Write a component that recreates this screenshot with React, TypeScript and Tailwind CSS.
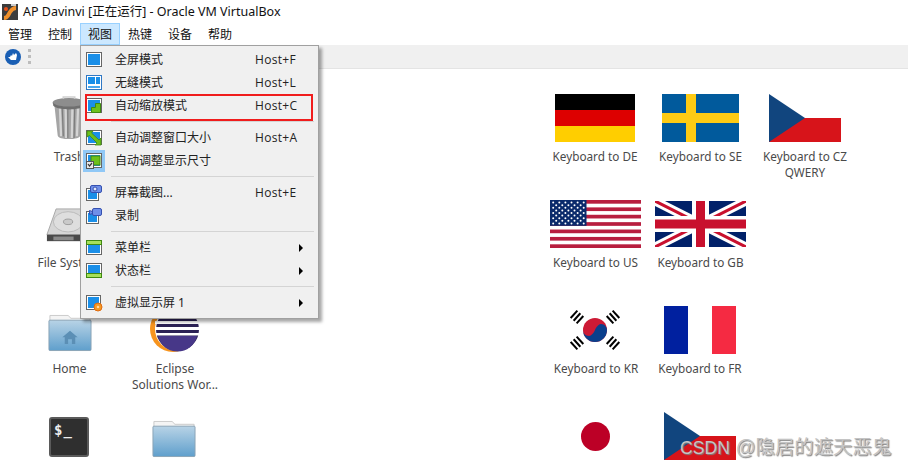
import type { ReactNode } from "react";

const menuFont =
	"font-['Noto_Sans','Noto_Sans_CJK_SC',sans-serif]";

function Frame({
	children,
	small,
	light,
}: {
	children?: ReactNode;
	small?: boolean;
	light?: boolean;
}) {
	return (
		<svg width="16" height="16" viewBox="0 0 16 16" className="shrink-0">
			{small ? (
				<>
					<rect x="0.5" y="3.5" width="12" height="12" fill="#fff" stroke="#666" />
					<rect x="2" y="5" width="9" height="9" fill="#1a8fe8" />
				</>
			) : (
				<>
					<rect x="0.5" y="0.5" width="15" height="14" fill="#fff" stroke="#666" />
					{!light && <rect x="2" y="2" width="12" height="11" fill="#1a8fe8" />}
				</>
			)}
			{children}
		</svg>
	);
}

const menuIcons: Record<string, ReactNode> = {
	full: <Frame />,
	seamless: (
		<Frame light>
			<rect x="0.5" y="0.5" width="15" height="14" fill="#fff" stroke="#2f78c4" />
			<rect x="2" y="2" width="7" height="7" fill="#1a8fe8" />
			<rect x="10" y="2" width="4" height="7" fill="#1a8fe8" />
			<rect x="2" y="11" width="12" height="2" fill="#4aa8ee" />
		</Frame>
	),
	autoscale: (
		<Frame>
			<path d="M14.500 5.500h-5v4h-4v5h9z" fill="#6cc01c" stroke="#3f8a10" />
		</Frame>
	),
	fit: (
		<Frame>
			<path d="M1 1h6L5.500 3 13 10l2-2v7H9l2-2L3.500 5.500 1 7z" fill="#6cc01c" stroke="#3f8a10" strokeWidth="0.8" />
		</Frame>
	),
	guest: (
		<Frame>
			<rect x="5" y="3" width="9" height="9" fill="#6cc01c" stroke="#3f8a10" />
			<rect x="0.500" y="8.500" width="7" height="7" fill="#e8e8e8" stroke="#555" />
			<path d="M2 11l1.500 2L6 10" fill="none" stroke="#333" strokeWidth="1.2" />
		</Frame>
	),
	screenshot: (
		<Frame small>
			<rect x="4.500" y="0.500" width="11" height="7" rx="1.500" fill="#6f8fe8" stroke="#3550b0" />
			<circle cx="9" cy="4" r="2" fill="#dfe6fa" stroke="#3550b0" />
		</Frame>
	),
	record: (
		<Frame small>
			<path d="M3.500 2.500l3 1v2l-3 1z" fill="#6f8fe8" stroke="#3550b0" />
			<rect x="6.500" y="0.500" width="9" height="7" rx="1.500" fill="#6f8fe8" stroke="#3550b0" />
		</Frame>
	),
	menubar: (
		<Frame>
			<rect x="0.500" y="0.500" width="15" height="4" fill="#a6e05a" stroke="#3f8a10" />
		</Frame>
	),
	statusbar: (
		<Frame>
			<rect x="0.500" y="10.500" width="15" height="4" fill="#a6e05a" stroke="#3f8a10" />
		</Frame>
	),
	screen: (
		<svg width="16" height="16" viewBox="0 0 16 16" className="shrink-0 overflow-visible">
			<rect x="0.500" y="0.500" width="14" height="14" fill="#fff" stroke="#666" />
			<rect x="2" y="2" width="11" height="11" fill="#1a8fe8" />
			<circle cx="12" cy="12" r="4" fill="#f59a23" stroke="#e06a10" />
			<circle cx="12" cy="12" r="1.300" fill="#ffd9a0" />
		</svg>
	),
};

type MenuEntry =
	| "sep"
	| { icon: string; label: string; shortcut?: string; arrow?: boolean; checked?: boolean };

const menuEntries: MenuEntry[] = [
	{ icon: "full", label: "全屏模式", shortcut: "Host+F" },
	{ icon: "seamless", label: "无缝模式", shortcut: "Host+L" },
	{ icon: "autoscale", label: "自动缩放模式", shortcut: "Host+C" },
	"sep",
	{ icon: "fit", label: "自动调整窗口大小", shortcut: "Host+A" },
	{ icon: "guest", label: "自动调整显示尺寸", checked: true },
	"sep",
	{ icon: "screenshot", label: "屏幕截图...", shortcut: "Host+E" },
	{ icon: "record", label: "录制" },
	"sep",
	{ icon: "menubar", label: "菜单栏", arrow: true },
	{ icon: "statusbar", label: "状态栏", arrow: true },
	"sep",
	{ icon: "screen", label: "虚拟显示屏 1", arrow: true },
];

function ViewMenu() {
	return (
		<div
			className={`absolute top-[45px] left-[80px] z-10 w-[239px] border border-[#a0a0a0] bg-[#f0f0f0] pt-[2px] pb-[4px] text-xs text-[#222] shadow-[3px_3px_3px_rgba(0,0,0,0.35)] ${menuFont}`}
		>
			{menuEntries.map((entry, i) =>
				entry === "sep" ? (
					<div key={`sep-${i}`} className="flex h-[9px] items-center pl-[30px]">
						<div className="mr-[4px] h-px flex-1 bg-[#d4d4d4]" />
					</div>
				) : (
					<div key={entry.label} className="flex h-[23px] items-center">
						<div
							className={`ml-[2px] flex h-[22px] w-[22px] items-center justify-center ${entry.checked ? "bg-[#90c8f6]" : ""}`}
						>
							{menuIcons[entry.icon]}
						</div>
						<span className="ml-[10px] w-[140px] whitespace-nowrap">
							{entry.label}
						</span>
						{entry.shortcut && (
							<span className="font-['Open_Sans',sans-serif] tracking-[0.3px]">
								{entry.shortcut}
							</span>
						)}
						{entry.arrow && (
							<span className="ml-[44px] h-0 w-0 border-y-[4px] border-l-[4px] border-y-transparent border-l-black" />
						)}
					</div>
				),
			)}
			<div className="pointer-events-none absolute top-[48px] left-[4px] h-[27px] w-[228px] border-2 border-[#f01c1c]" />
		</div>
	);
}

function DeFlag() {
	return (
		<div className="flex h-12 w-20 flex-col">
			<div className="flex-1 bg-black" />
			<div className="flex-1 bg-[#dd0000]" />
			<div className="flex-1 bg-[#ffce00]" />
		</div>
	);
}

function SeFlag() {
	return (
		<svg width="77" height="48" viewBox="0 0 77 48">
			<rect width="77" height="48" fill="#015a9c" />
			<rect x="24" width="10" height="48" fill="#fecb14" />
			<rect y="19" width="77" height="10" fill="#fecb14" />
		</svg>
	);
}

function CzFlag() {
	return (
		<svg width="72" height="48" viewBox="0 0 72 48">
			<rect y="24" width="72" height="24" fill="#d7141a" />
			<path d="M0 0l36 24L0 48z" fill="#11457e" />
		</svg>
	);
}

function UsFlag() {
	const stars = [];
	for (let r = 0; r < 9; r++) {
		const count = r % 2 === 0 ? 6 : 5;
		for (let c = 0; c < count; c++) {
			stars.push(
				<circle
					key={`${r}-${c}`}
					cx={(r % 2 === 0 ? 3.2 : 6.2) + c * 6.1}
					cy={2.6 + r * 2.6}
					r="1"
					fill="#fff"
				/>,
			);
		}
	}
	return (
		<svg width="91" height="48" viewBox="0 0 91 48">
			<rect width="91" height="48" fill="#fff" />
			{[0, 1, 2, 3, 4, 5, 6].map((i) => (
				<rect key={i} y={i * 7.385} width="91" height="3.69" fill="#b81e3f" />
			))}
			<rect width="36.500" height="25.800" fill="#0a2a6b" />
			{stars}
		</svg>
	);
}

function GbFlag() {
	return (
		<svg width="91" height="46" viewBox="0 0 91 46">
			<rect width="91" height="46" fill="#012169" />
			<path d="M0 0l91 46M91 0L0 46" stroke="#fff" strokeWidth="9" />
			<path d="M0 0l91 46M91 0L0 46" stroke="#c8102e" strokeWidth="3" />
			<rect x="37" width="17" height="46" fill="#fff" />
			<rect y="15" width="91" height="16" fill="#fff" />
			<rect x="41" width="9" height="46" fill="#c8102e" />
			<rect y="18.500" width="91" height="9" fill="#c8102e" />
		</svg>
	);
}

function Trigram({ x, y, angle }: { x: number; y: number; angle: number }) {
	return (
		<g transform={`translate(${x} ${y}) rotate(${angle})`} fill="#000">
			<rect x="-5" y="-5" width="10" height="2" />
			<rect x="-5" y="-1" width="10" height="2" />
			<rect x="-5" y="3" width="10" height="2" />
		</g>
	);
}

function KrFlag() {
	return (
		<svg width="52" height="46" viewBox="0 0 52 46">
			<Trigram x={7} y={10} angle={-48} />
			<Trigram x={43} y={10} angle={48} />
			<Trigram x={7} y={36} angle={48} />
			<Trigram x={43} y={36} angle={-48} />
			<circle cx="25" cy="23" r="12" fill="#cd1a35" />
			<path d="M13 23a12 12 0 0 0 24 0c0-3-2.500-6-6-6s-6 6-6 6-2.500 6-6 6-6-3-6-6z" fill="#0a3f8c" />
		</svg>
	);
}

function FrFlag() {
	return (
		<div className="flex h-12 w-[72px]">
			<div className="flex-1 bg-[#00209f]" />
			<div className="flex-1 bg-white" />
			<div className="flex-1 bg-[#f52a42]" />
		</div>
	);
}

function JpFlag() {
	return <div className="h-[29px] w-[29px] rounded-full bg-[#bc0026]" />;
}

function TrashIcon() {
	return (
		<svg width="34" height="44" viewBox="0 0 30 46" preserveAspectRatio="none">
			<path d="M2 8l3 33c0 3 5 4 10 4s10-1 10-4l3-33z" fill="#a5a5a5" />
			<path d="M7 12l1 30M12 12l.5 32M18 12l-.5 32M23 12l-1 30" stroke="#d4d4d4" strokeWidth="2" />
			<path d="M9 12l1 30M14 12v32M20 12l-.5 32" stroke="#7c7c7c" strokeWidth="1" />
			<ellipse cx="15" cy="7" rx="14.500" ry="5" fill="#8d8d8d" />
			<path d="M1 7c2 3 8 4 14 4s12-1 14-4v3c-2 3-8 4-14 4S3 13 1 10z" fill="#6f6f6f" />
			<path d="M10 3V1h10v2" fill="none" stroke="#d0d0d0" strokeWidth="1.500" />
		</svg>
	);
}

function DiskIcon() {
	return (
		<svg width="46" height="35" viewBox="0 0 50 38" preserveAspectRatio="none" className="translate-y-[1px]">
			<path d="M1 29L11 1h38v28z" fill="#d6d6d6" stroke="#a4a4a4" />
			<ellipse cx="24" cy="15" rx="16" ry="11" fill="#dedede" stroke="#b8b8b8" />
			<ellipse cx="24" cy="15" rx="5" ry="3" fill="#cacaca" stroke="#9a9a9a" />
			<rect x="1" y="29" width="48" height="7" fill="#4a4a4a" />
			<rect x="8" y="31" width="22" height="4" fill="#8a8a8a" />
		</svg>
	);
}

function FolderIcon({ home }: { home?: boolean }) {
	return (
		<svg width="44" height="37" viewBox="0 0 46 39" preserveAspectRatio="none" className="translate-y-[2.5px]">
			<defs>
				<linearGradient id="folderFill" x1="0" y1="0" x2="0" y2="1">
					<stop offset="0" stopColor="#b8d3e6" />
					<stop offset="1" stopColor="#5f9fcc" />
				</linearGradient>
			</defs>
			<path d="M2 4V1h19l3 3h20v4H2z" fill="#f4f4f4" stroke="#c8c8c8" />
			<rect x="1" y="6" width="44" height="32" rx="1" fill="url(#folderFill)" stroke="#8aa2b4" />
			{home && <path d="M23 17l-8 7h2.500v7h3.500v-5h4v5h3.500v-7H31z" fill="#5b8fb5" />}
		</svg>
	);
}

function EclipseIcon() {
	return (
		<svg width="50" height="46" viewBox="0 0 50 46" className="translate-y-[-1px]">
			<circle cx="23" cy="23" r="23" fill="#f7941e" />
			<circle cx="27" cy="23" r="22" fill="#fff" />
			<circle cx="27.500" cy="23.500" r="21.500" fill="#2c2255" />
			<path d="M8 30h39a20 20 0 0 1-39 0z" fill="#473788" />
			<rect x="5" y="15" width="45" height="3" fill="#fff" />
			<rect x="5" y="21" width="45" height="3" fill="#fff" />
			<rect x="6" y="27" width="43" height="2.500" fill="#fff" />
		</svg>
	);
}

function TerminalIcon() {
	return (
		<div className="flex h-10 w-10 translate-x-[-1px] translate-y-[1px] items-start rounded-[3px] border-2 border-[#5a5a5a] bg-[#2f2f2f] px-[3px] pt-[3px] font-['DejaVu_Sans_Mono',monospace] text-[14px] leading-[16px] font-bold tracking-[1px] text-[#eee]">
			$_
		</div>
	);
}

type DesktopItem = {
	pos: string;
	icon: ReactNode;
	label: ReactNode;
	small?: boolean;
};

const desktopItems: DesktopItem[] = [
	{ pos: "left-[17px] top-[94px]", icon: <TrashIcon />, label: "Trash" },
	{ pos: "left-[17px] top-[200px]", icon: <DiskIcon />, label: "File System" },
	{ pos: "left-[17.500px] top-[306px]", icon: <FolderIcon home />, label: "Home" },
	{
		pos: "left-[123px] top-[306px]",
		icon: <EclipseIcon />,
		label: (
			<>
				Eclipse
				<br />
				Solutions Wor...
			</>
		),
	},
	{ pos: "left-[18px] top-[412px]", icon: <TerminalIcon />, label: "" },
	{ pos: "left-[122px] top-[412px]", icon: <FolderIcon />, label: "" },
	{ pos: "left-[543px] top-[94px]", icon: <DeFlag />, label: "Keyboard to DE", small: true },
	{ pos: "left-[648.500px] top-[94px]", icon: <SeFlag />, label: "Keyboard to SE", small: true },
	{
		pos: "left-[753px] top-[94px]",
		icon: <CzFlag />,
		small: true,
		label: (
			<>
				Keyboard to CZ
				<br />
				QWERY
			</>
		),
	},
	{ pos: "left-[543.500px] top-[200px]", icon: <UsFlag />, label: "Keyboard to US", small: true },
	{ pos: "left-[648.500px] top-[200px]", icon: <GbFlag />, label: "Keyboard to GB", small: true },
	{ pos: "left-[544px] top-[306px]", icon: <KrFlag />, label: "Keyboard to KR", small: true },
	{ pos: "left-[648px] top-[306px]", icon: <FrFlag />, label: "Keyboard to FR", small: true },
	{ pos: "left-[543px] top-[412px]", icon: <JpFlag />, label: "" },
	{ pos: "left-[648px] top-[412px]", icon: <CzFlag />, label: "" },
];

function DesktopIcon({ item }: { item: DesktopItem }) {
	return (
		<div className={`absolute flex w-[104px] flex-col items-center ${item.pos}`}>
			<div className="flex h-12 items-center justify-center">{item.icon}</div>
			<div
				className={`text-center font-['Noto_Sans',sans-serif] leading-4 whitespace-nowrap text-[#4a4a4a] ${item.small ? "mt-[6px] text-[11.75px]" : "mt-[7px] text-xs"}`}
			>
				{item.label}
			</div>
		</div>
	);
}

const menus = ["管理", "控制", "视图", "热键", "设备", "帮助"];

export default function App() {
	return (
		<div className="relative flex h-[467px] w-[908px] flex-col overflow-hidden bg-white">
			<div className={`flex h-[23px] shrink-0 items-center gap-[5px] pl-[2px] text-[12.5px] text-[#111] ${menuFont}`}>
				<svg width="16" height="16" viewBox="0 0 16 16">
					<rect width="16" height="16" fill="#3c3c3c" />
					<path d="M2 14c4 0 4-3 6-6s3-4 6-4" fill="none" stroke="#f0902a" strokeWidth="4" />
					<circle cx="4" cy="5" r="2" fill="#e8501a" />
					<rect x="9" y="0" width="5" height="2" fill="#ccc" />
				</svg>
				<span className="pt-[1px]">AP Davinvi [正在运行] - Oracle VM VirtualBox</span>
			</div>
			<div className={`flex h-[22px] shrink-0 items-stretch text-xs text-[#111] ${menuFont}`}>
				{menus.map((m) => (
					<div
						key={m}
						className={`flex w-10 items-center justify-center pt-[1px] ${m === "视图" ? "border border-[#99d1ff] bg-[#cce8ff]" : ""}`}
					>
						{m}
					</div>
				))}
			</div>
			<div className="flex h-[24px] shrink-0 items-center gap-[6px] border-b border-[#e4e4e4] bg-[#f0f0f0] pl-[5px]">
				<svg width="16" height="16" viewBox="0 0 16 16">
					<circle cx="8" cy="8" r="8" fill="#1a5fb4" />
					<path d="M3 8l2 0 1-2 1 1 1-3 1 2 2-2 1 2-1 5H6z" fill="#fff" />
				</svg>
				<div className="flex flex-col gap-[3px] pl-[1px]">
					<div className="h-[3px] w-[3px] bg-[#bdbdbd]" />
					<div className="h-[3px] w-[3px] bg-[#bdbdbd]" />
					<div className="h-[3px] w-[3px] bg-[#bdbdbd]" />
				</div>
			</div>
			{desktopItems.map((item) => (
				<DesktopIcon key={item.pos} item={item} />
			))}
			<ViewMenu />
			<div className="absolute top-[435px] left-[680px] z-20 flex items-baseline font-['Liberation_Sans','Noto_Sans_CJK_SC',sans-serif] leading-6 whitespace-nowrap text-[#c4c4c4] [text-shadow:1px_1px_1px_#808080]">
				<span className="mr-[6px] text-[17.6px]">CSDN</span>
				<span className="text-[19.4px]">@隐居的遮天恶鬼</span>
			</div>
		</div>
	);
}
